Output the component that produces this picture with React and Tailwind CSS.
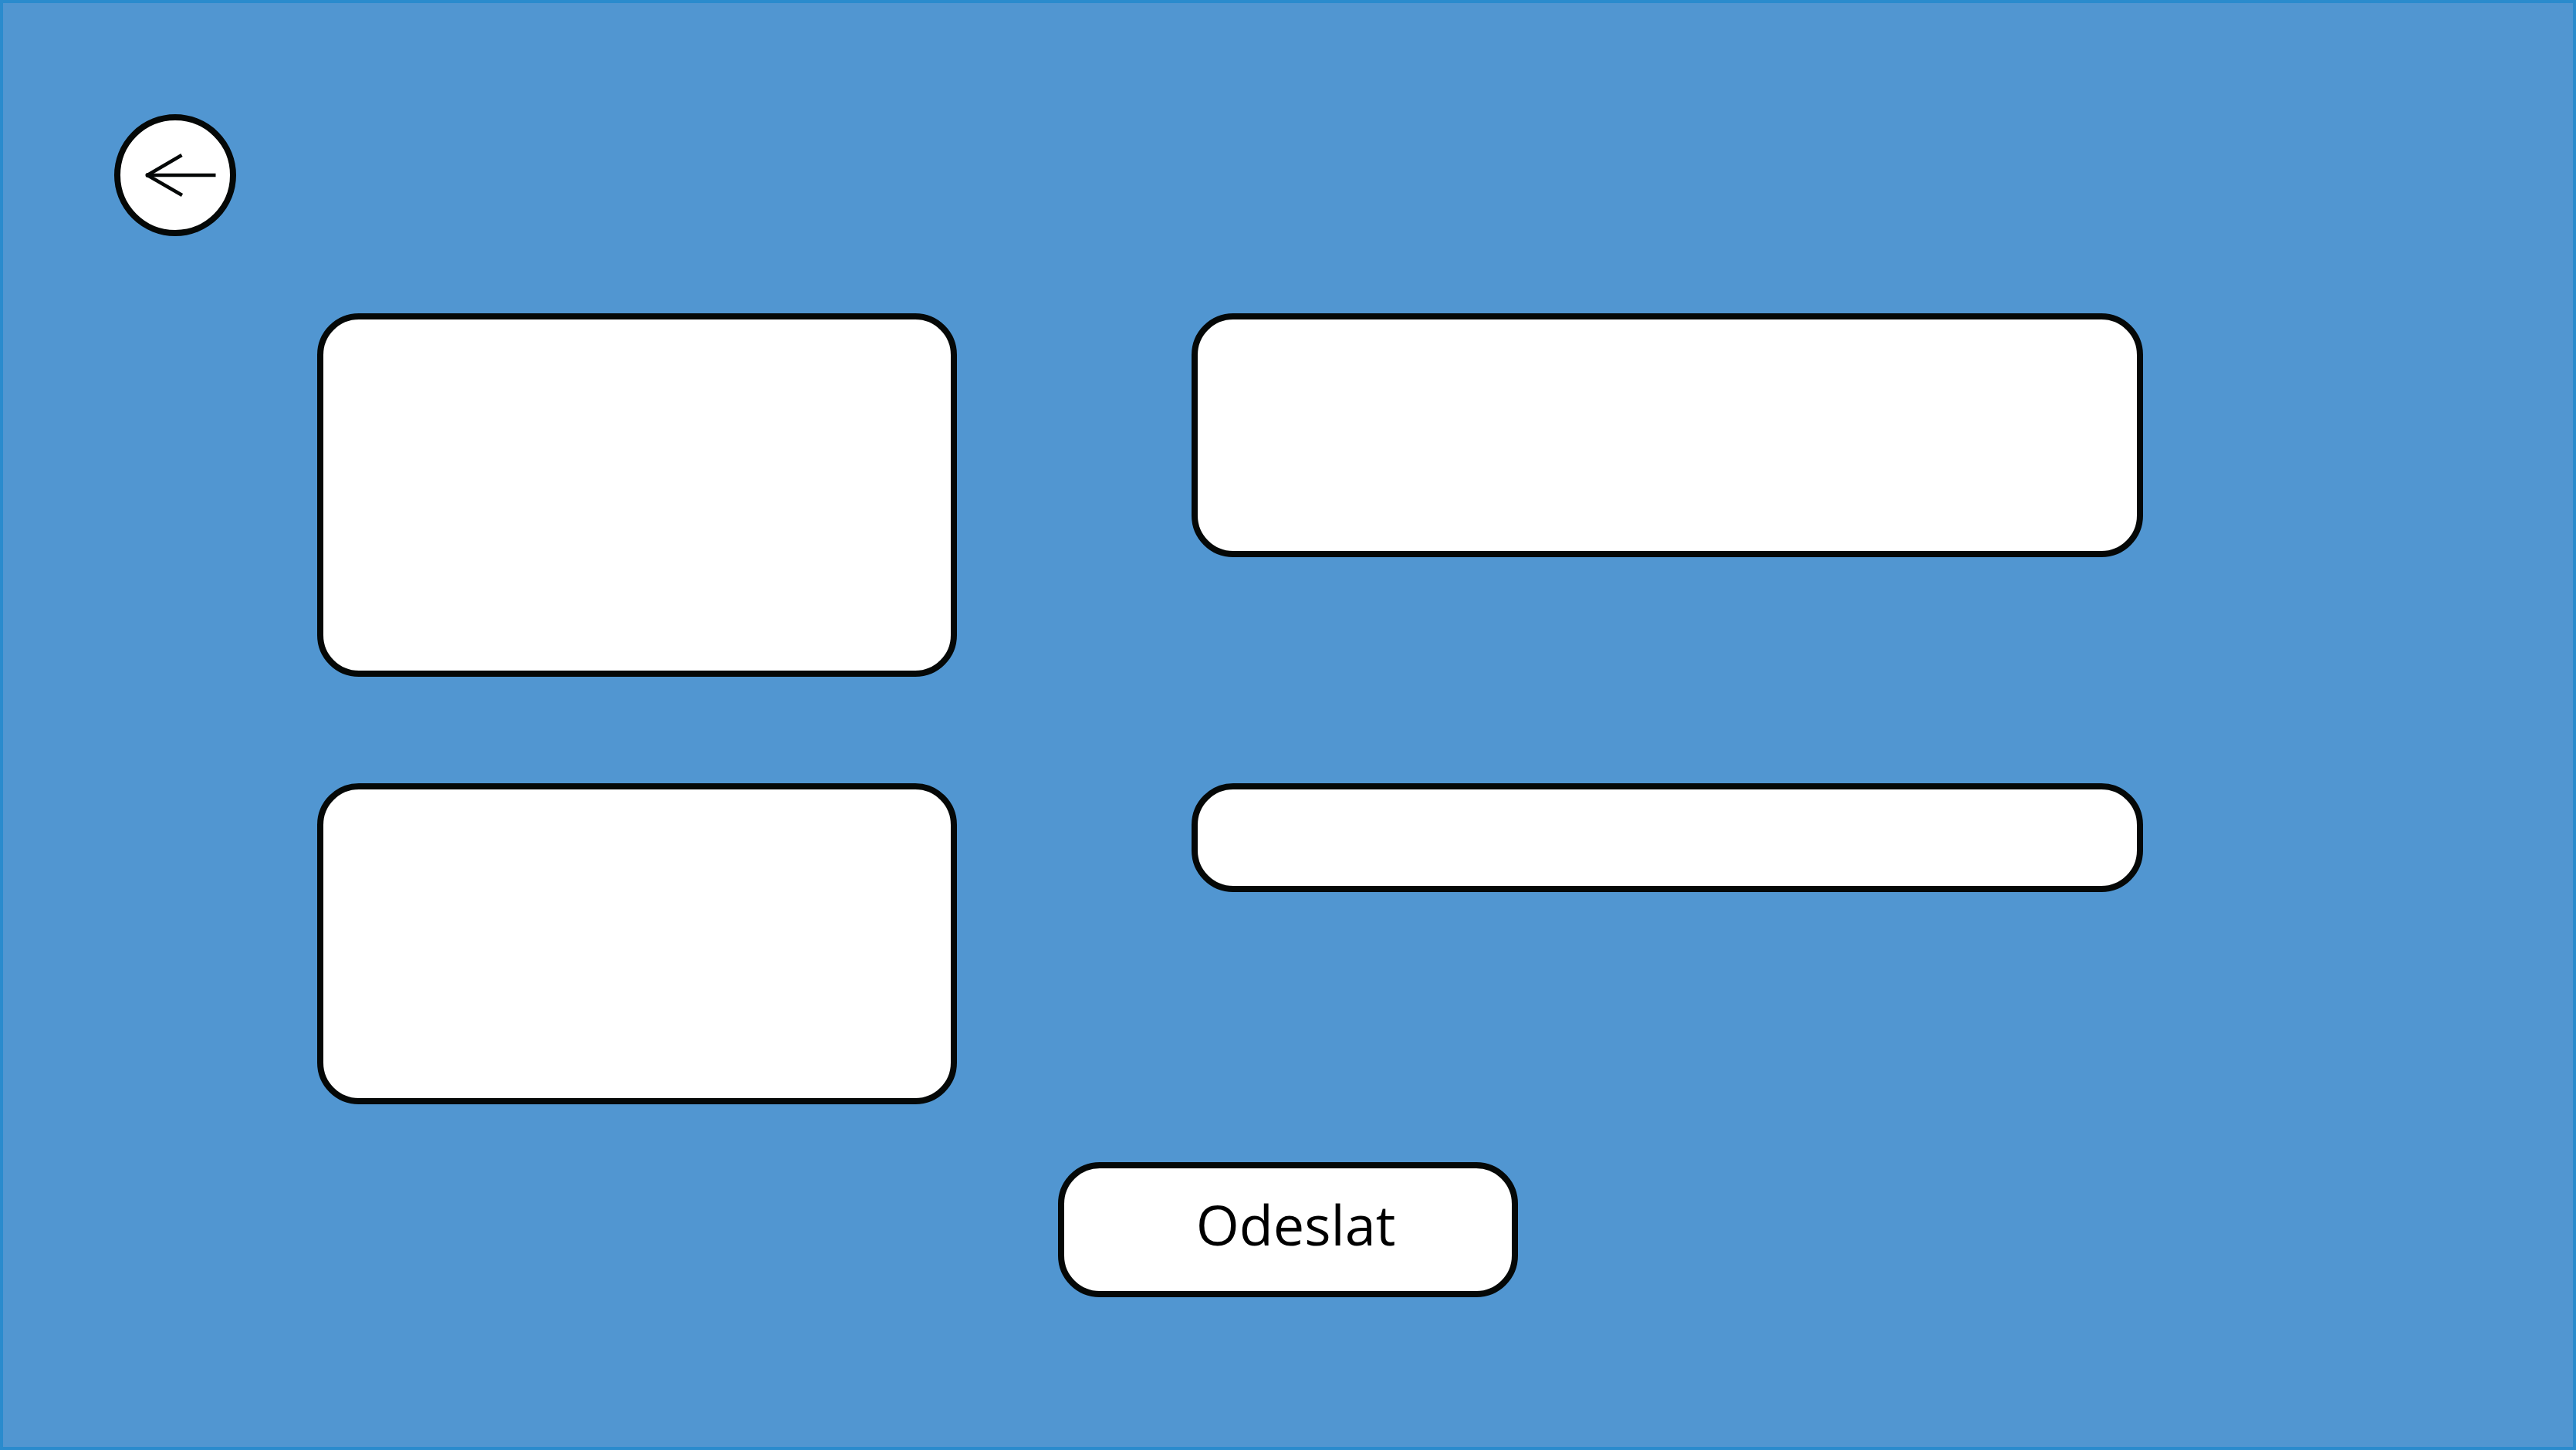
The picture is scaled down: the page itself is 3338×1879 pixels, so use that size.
const field =
  'block w-full resize-none rounded-[54px] border-8 border-[#050807] bg-white px-10 text-5xl text-black';

function BackArrow() {
  return (
    <svg
      viewBox="0 0 142 142"
      className="h-full w-full"
      fill="none"
      stroke="#050807"
      strokeWidth="4.500"
      aria-hidden="true"
    >
      <path d="M123.500 71H35" />
      <path d="M79.500 45L35 71L80 97" strokeLinejoin="round" />
      <circle cx="35.500" cy="71" r="3" fill="#050807" stroke="none" />
    </svg>
  );
}

export default function App() {
  return (
    <main className="min-h-screen border-4 border-[#2a8bcd] bg-[#5196d1] pt-36 pb-20 font-['Open_Sans','Noto_Sans',sans-serif]">
      <header className="pl-36">
        <button
          type="button"
          aria-label="Zpět"
          className="block size-[158px] rounded-full border-8 border-[#050807] bg-white"
        >
          <BackArrow />
        </button>
      </header>

      <form className="mt-[100px]" onSubmit={(event) => event.preventDefault()}>
        <div className="grid grid-cols-[829fr_1233fr] items-start gap-x-[304px] gap-y-[138px] pr-[557px] pl-[407px]">
          <textarea aria-label="Pole 1" className={`${field} h-[471px] py-8`} />
          <textarea aria-label="Pole 2" className={`${field} h-[316px] py-8`} />
          <textarea aria-label="Pole 3" className={`${field} h-[416px] py-8`} />
          <input type="text" aria-label="Pole 4" className={`${field} h-[141px]`} />
        </div>

        <button
          type="submit"
          className="mx-auto mt-[75px] flex h-[175px] w-[596px] items-center justify-center rounded-[54px] border-8 border-[#050807] bg-white pb-4 pl-5 text-7xl text-black"
        >
          Odeslat
        </button>
      </form>
    </main>
  );
}
